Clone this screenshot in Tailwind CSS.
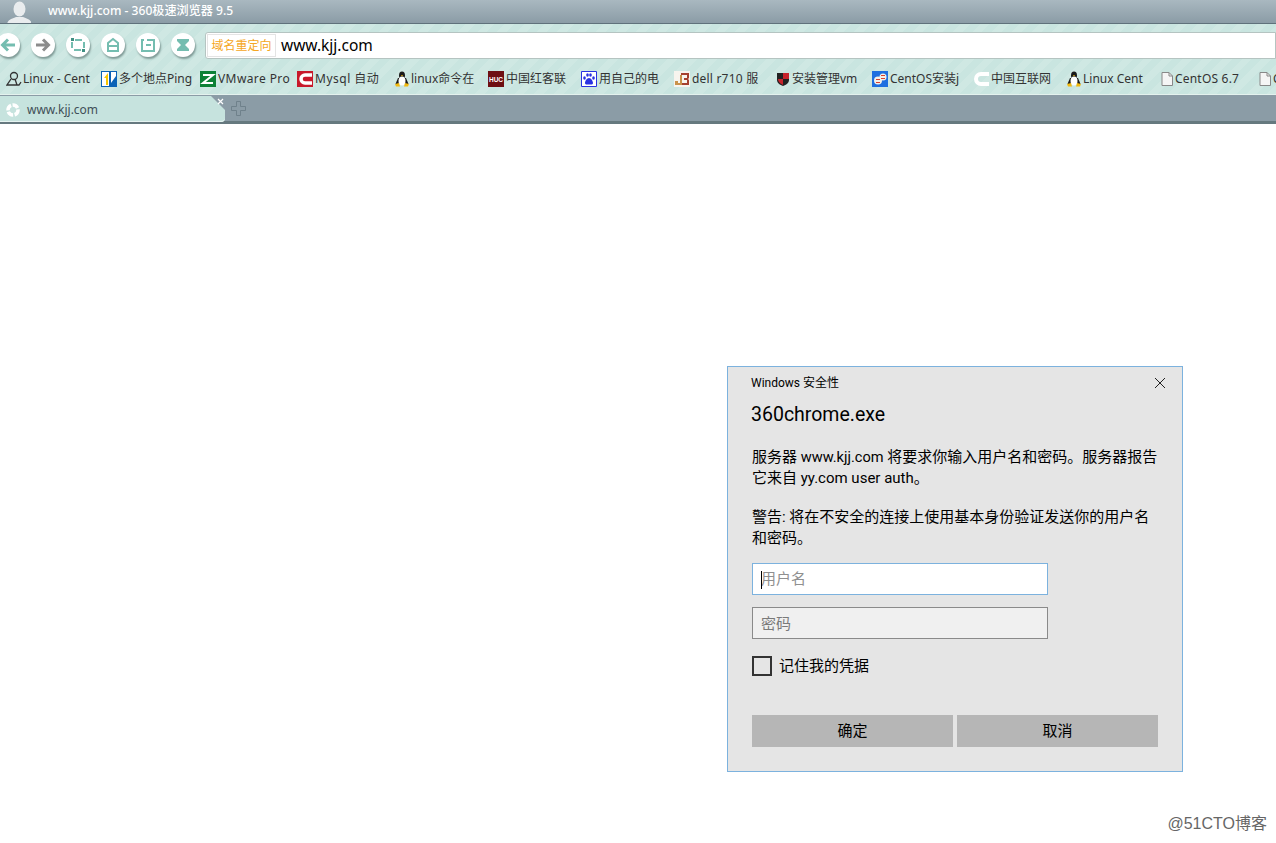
<!DOCTYPE html>
<html lang="en">
<head>
    <meta charset="UTF-8">
    <meta name="viewport" content="width=device-width, initial-scale=1.0">
    <title>www.kjj.com - 360极速浏览器 9.5</title>
    <script src="https://cdn.jsdelivr.net/npm/@tailwindcss/browser@4"></script>
</head>
<body>
<div class="relative h-[843px] w-[1276px] overflow-hidden bg-white font-['Noto_Sans','Noto_Sans_CJK_SC',sans-serif]">

    <!-- title bar -->
    <div class="flex h-[24px] items-center overflow-hidden border-b border-[#5f717b] bg-gradient-to-b from-[#a9b8c0] to-[#8b9ca6]">
        <svg class="ml-[7px] h-[24px] w-[24px] shrink-0" viewBox="0 0 24 24"><ellipse cx="12.500" cy="9" rx="6" ry="7.500" fill="#e9ecee"/><path d="M0 24c1-5 6-5.500 9-7h7c3 1.500 8 2 9 7z" fill="#e9ecee"/></svg>
        <span class="ml-[17px] text-[12.100px] font-medium leading-none text-white">www.kjj.com - 360极速浏览器 9.5</span>
    </div>

    <!-- toolbar + bookmarks -->
    <div class="h-[71px] overflow-hidden border-b border-[#e4f2ee] bg-[#c9e5e0] bg-[repeating-linear-gradient(135deg,#c9e5e0_0,#c9e5e0_7px,#cfe8e3_7px,#cfe8e3_14px)]">
        <div class="flex h-[41px] items-center">
            <div class="ml-[-4px] flex items-center gap-[11px]">
                <button class="flex h-[24px] w-[24px] items-center justify-center rounded-full bg-white shadow-[1px_2px_2px_#7f9a96]"><svg class="h-[16px] w-[16px]" viewBox="0 0 16 16" fill="none" stroke="#74bdb0" stroke-width="3"><path d="M15 8H3M8 2.500 2.500 8 8 13.500"/></svg></button>
                <button class="flex h-[24px] w-[24px] items-center justify-center rounded-full bg-white shadow-[1px_2px_2px_#7f9a96]"><svg class="h-[16px] w-[16px]" viewBox="0 0 16 16" fill="none" stroke="#8c8c8c" stroke-width="3"><path d="M1 8h12M8 2.500 13.500 8 8 13.500"/></svg></button>
                <button class="flex h-[24px] w-[24px] items-center justify-center rounded-full bg-white shadow-[1px_2px_2px_#7f9a96]"><svg class="h-[16px] w-[16px]" viewBox="0 0 16 16" fill="none" stroke="#74bdb0" stroke-width="2"><path d="M5 3h7M14 5v6M11 13H4M2 11V5"/><path d="M1 1h3v3H1zM12 12h3v3h-3z" fill="#3f8f82" stroke="none"/></svg></button>
                <button class="flex h-[24px] w-[24px] items-center justify-center rounded-full bg-white shadow-[1px_2px_2px_#7f9a96]"><svg class="h-[16px] w-[16px]" viewBox="0 0 16 16" fill="none" stroke="#74bdb0" stroke-width="2"><path d="M3 14V6l5-4 5 4v8zM3 9h10"/></svg></button>
                <button class="flex h-[24px] w-[24px] items-center justify-center rounded-full bg-white shadow-[1px_2px_2px_#7f9a96]"><svg class="h-[16px] w-[16px]" viewBox="0 0 16 16" fill="none" stroke="#74bdb0" stroke-width="2"><path d="M7 3h7v11H2V3h2M6 8h5"/></svg></button>
                <button class="flex h-[24px] w-[24px] items-center justify-center rounded-full bg-white shadow-[1px_2px_2px_#7f9a96]"><svg class="h-[16px] w-[16px]" viewBox="0 0 16 16" fill="#74bdb0"><path d="M2 2h12v2l-4 4 4 4v2H2v-2l4-4-4-4z"/></svg></button>
            </div>
            <div class="ml-[10px] mt-[2px] flex h-[27px] flex-1 items-center rounded-l-[3px] border border-[#b5c4c1] bg-white">
                <span class="ml-px flex h-[23px] w-[69px] items-center justify-center border border-[#e4e4e4] text-[12px] text-[#f5a623]">域名重定向</span>
                <span class="ml-[5px] text-[15.500px] text-black">www.kjj.com</span>
            </div>
        </div>
        <div class="flex h-[30px] items-start overflow-hidden pl-[6px] pt-[5px] text-[12px] leading-[18px] text-[#333]">
            <a class="flex w-[95px] shrink-0 items-center gap-[1px]"><svg class="h-[16px] w-[16px] shrink-0" viewBox="0 0 16 16" fill="none" stroke="#333" stroke-width="1.300"><circle cx="8" cy="5" r="3.500"/><path d="M5 8 1 14h12l2-3M9 8l2 6"/></svg>Linux - Cent</a>
            <a class="flex w-[99px] shrink-0 items-center gap-[2px]"><svg class="h-[16px] w-[16px] shrink-0" viewBox="0 0 16 16"><path fill="#fff" d="M0 0h16v16H0z"/><path fill="#0b63b6" d="M0 0h16v1H0zM0 15h16v1H0zM0 0h1v16H0zM15 0h1v16h-1zM8 1h2v14H8z"/><path fill="#f6c700" d="M3 7l4-5v12H5V7z"/><path fill="#0b63b6" d="M10 12l5-7v10h-5z"/></svg>多个地点Ping</a>
            <a class="flex w-[97px] shrink-0 items-center gap-[2px] tracking-[0.4px]"><svg class="h-[16px] w-[16px] shrink-0" viewBox="0 0 16 16"><path fill="#0d8136" d="M0 0h16v16H0z"/><path fill="none" stroke="#fff" stroke-width="2" d="M3 4h10L3 12h10"/></svg>VMware Pro</a>
            <a class="flex w-[97px] shrink-0 items-center gap-[2px] tracking-[0.5px]"><svg class="h-[16px] w-[16px] shrink-0" viewBox="0 0 16 16"><path fill="#c8192b" d="M0 0h16v16H0z"/><path fill="none" stroke="#fff" stroke-width="3.500" d="M15 4H8a4 4 0 0 0 0 8h7"/></svg>Mysql 自动</a>
            <a class="flex w-[94px] shrink-0 items-center gap-[1px]"><svg class="h-[16px] w-[16px] shrink-0" viewBox="0 0 16 16"><ellipse cx="8" cy="4.500" rx="3" ry="4" fill="#1a1a1a"/><path fill="#1a1a1a" d="M4 7h8l2.500 6h-13z"/><ellipse cx="8" cy="10" rx="3.500" ry="4.500" fill="#fff"/><path fill="#f2b90f" d="M1 13l4-1 1 3.500H2zM15 13l-4-1-1 3.500h4zM7 4h2l-1 1.500z"/></svg>linux命令在</a>
            <a class="flex w-[93px] shrink-0 items-center gap-[2px]"><svg class="h-[16px] w-[16px] shrink-0" viewBox="0 0 16 16"><path fill="#6e0f12" d="M0 0h16v16H0z"/><text x="8" y="11" font-size="6.500" font-weight="700" text-anchor="middle" fill="#fff" font-family="Liberation Sans">HUC</text></svg>中国红客联</a>
            <a class="flex w-[93px] shrink-0 items-center gap-[2px]"><svg class="h-[16px] w-[16px] shrink-0" viewBox="0 0 16 16"><path fill="#fff" stroke="#2932e1" d="M.5.500h15v15H.5z"/><g fill="#2932e1"><ellipse cx="3.500" cy="7" rx="1.300" ry="1.800"/><ellipse cx="6.500" cy="4" rx="1.300" ry="1.800"/><ellipse cx="9.500" cy="4" rx="1.300" ry="1.800"/><ellipse cx="12.500" cy="7" rx="1.300" ry="1.800"/><path d="M8 7c2 0 4 3 4 5s-2 1.500-4 1.500S4 14 4 12s2-5 4-5z"/></g></svg>用自己的电</a>
            <a class="flex w-[101px] shrink-0 items-center gap-[2px] tracking-[0.2px]"><svg class="h-[16px] w-[16px] shrink-0" viewBox="0 0 16 16"><path fill="#f7f4ee" d="M0 0h16v16H0z"/><path fill="#c9924b" d="M1 10h3v2h2V4h2v10H1z"/><path fill="#a5402f" d="M7 2h8v5l-1 1 1 1v5H8v-2h5V9h-3V7h3V4H7z"/></svg>dell r710 服</a>
            <a class="flex w-[97px] shrink-0 items-center gap-[1px]"><svg class="h-[16px] w-[16px] shrink-0" viewBox="0 0 16 16"><path fill="#222" d="M2 2h12v7c0 3-3 5-6 6-3-1-6-3-6-6z"/><path fill="#c8232c" d="M8 2h6v6H8zM3 8h5v6c-2-1-5-3-5-6z"/></svg>安装管理vm</a>
            <a class="flex w-[101px] shrink-0 items-center gap-[2px]"><svg class="h-[16px] w-[16px] shrink-0" viewBox="0 0 16 16"><path fill="#1f6fe0" d="M0 0h16v16H0z"/><circle cx="6" cy="9.500" r="4" fill="#f4f0ea"/><circle cx="11" cy="6" r="3.500" fill="#f4f0ea"/><path fill="#d9412f" d="M4 8h4v1H4zM4 11h4v1H4zM9 4h4v1H9zM9 7h4v1H9z"/></svg>CentOS安装j</a>
            <a class="flex w-[93px] shrink-0 items-center gap-[2px]"><svg class="h-[16px] w-[16px] shrink-0" viewBox="0 0 16 16"><path fill="none" stroke="#fff" stroke-width="4" d="M16 3H8a5 5 0 0 0 0 10h8"/></svg>中国互联网</a>
            <a class="flex w-[93px] shrink-0 items-center gap-[1px]"><svg class="h-[16px] w-[16px] shrink-0" viewBox="0 0 16 16"><ellipse cx="8" cy="4.500" rx="3" ry="4" fill="#1a1a1a"/><path fill="#1a1a1a" d="M4 7h8l2.500 6h-13z"/><ellipse cx="8" cy="10" rx="3.500" ry="4.500" fill="#fff"/><path fill="#f2b90f" d="M1 13l4-1 1 3.500H2zM15 13l-4-1-1 3.500h4zM7 4h2l-1 1.500z"/></svg>Linux Cent</a>
            <a class="flex w-[98px] shrink-0 items-center tracking-[0.2px]"><svg class="h-[16px] w-[16px] shrink-0" viewBox="0 0 16 16" fill="#f5f5f5" stroke="#888"><path d="M3 1.500h7l3.500 3.500v9.500H3z"/><path d="M10 1.500V5h3.500" fill="none"/></svg>CentOS 6.7</a>
            <a class="flex shrink-0 items-center"><svg class="h-[16px] w-[16px] shrink-0" viewBox="0 0 16 16" fill="#f5f5f5" stroke="#888"><path d="M3 1.500h7l3.500 3.500v9.500H3z"/><path d="M10 1.500V5h3.500" fill="none"/></svg>C</a>
        </div>
    </div>

    <!-- tab strip -->
    <div class="flex h-[29px] items-start border-b-[3px] border-[#66797f] bg-[#8b9ca6] pt-px">
        <div class="relative flex h-[26px] w-[225px] items-center rounded-br-[4px] bg-[#c6e3de] pt-[2px] shadow-[inset_0_-1px_0_#e6f4f1]">
            <svg class="ml-[5px] h-[16px] w-[16px]" viewBox="0 0 16 16" fill="none" stroke="#fff" stroke-width="3.500" stroke-dasharray="6 1.500"><circle cx="8" cy="8" r="5"/></svg>
            <span class="ml-[6px] text-[12px] leading-none text-[#3f4f57]">www.kjj.com</span>
            <div class="absolute right-0 top-0 h-0 w-0 border-l-[14px] border-t-[14px] border-l-transparent border-t-[#8b9ca6]"></div>
            <svg class="absolute right-[1px] top-[2px] h-[7px] w-[7px]" viewBox="0 0 7 7" stroke="#fff" stroke-width="1.200"><path d="M1 1l5 5M6 1 1 6"/></svg>
        </div>
        <svg class="ml-[6px] mt-[5px] h-[15px] w-[15px]" viewBox="0 0 15 15" fill="none" stroke="#6f818b"><path d="M5.500.500h4v5h5v4h-5v5h-4v-5h-5v-4h5z"/></svg>
    </div>

    <!-- windows credential dialog -->
    <div class="absolute left-[727px] top-[366px] h-[406px] w-[456px] border border-[#7cb2de] bg-[#e5e5e5] pl-[24px] pr-[24px] font-['Roboto','Noto_Sans_CJK_SC',sans-serif] text-black">
        <div class="flex h-[31px] items-center justify-between pt-[1px]">
            <span class="ml-[-1px] text-[12px] leading-none">Windows 安全性</span>
            <svg class="mr-[-8px] h-[12px] w-[12px]" viewBox="0 0 12 12" stroke="#222"><path d="M1 1l10 10M11 1 1 11"/></svg>
        </div>
        <h1 class="ml-[-1px] mt-[3px] text-[19.500px] leading-[28px]">360chrome.exe</h1>
        <p class="mt-[18px] whitespace-nowrap text-[15px] leading-[21px]">服务器 <span class="text-[14.600px]">www.kjj.com</span> 将要求你输入用户名和密码。服务器报告<br>它来自 yy.com user auth。</p>
        <p class="mt-[18px] whitespace-nowrap text-[15px] leading-[21px]">警告: 将在不安全的连接上使用基本身份验证发送你的用户名<br>和密码。</p>
        <div class="relative mt-[14px] flex h-[32px] w-[296px] items-center border border-[#7cb2de] bg-white pl-[8px] pt-[1px] text-[15px] text-[#8f8f8f]">
            <span class="absolute left-[8px] top-[7px] h-[18px] w-px bg-black"></span>用户名
        </div>
        <div class="mt-[12px] flex h-[32px] w-[296px] items-center border border-[#8a8a8a] bg-[#f0f0f0] pl-[8px] pt-[2px] text-[15px] text-[#7a7a7a]">密码</div>
        <label class="mt-[17px] flex h-[20px] items-center gap-[8px] text-[15px]">
            <span class="h-[20px] w-[20px] border-2 border-[#333]"></span><span class="ml-[-1px] pt-[1px]">记住我的凭据</span>
        </label>
        <div class="mt-[39px] flex gap-[4px]">
            <button class="h-[32px] w-[201px] bg-[#b6b6b6] pt-[1px] text-[15px]">确定</button>
            <button class="h-[32px] w-[201px] bg-[#b6b6b6] pt-[1px] text-[15px]">取消</button>
        </div>
    </div>

    <!-- watermark -->
    <div class="absolute right-[9px] top-[814px] font-['Liberation_Sans','Noto_Sans_CJK_SC',sans-serif] text-[16px] leading-[20px] text-[#666]">@51CTO博客</div>
</div>
</body>
</html>
